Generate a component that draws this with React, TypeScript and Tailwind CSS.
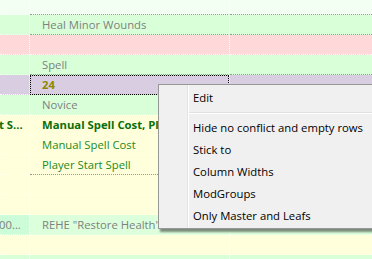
type Row = {
  left: string;
  mid: string;
  right: string;
  line: "gray" | "white" | "none";
  leftText?: string;
  leftClass?: string;
  midText?: string;
  midClass?: string;
  focus?: boolean;
};

const GREEN = "bg-[#d9ffd9]";
const PINK = "bg-[#ffd9d9]";
const PURPLE = "bg-[#d9cde1]";
const YELLOW = "bg-[#ffffdc]";

const rows: Row[] = [
  { left: GREEN, mid: GREEN, right: GREEN, line: "gray", midText: "Heal Minor Wounds", midClass: "text-[#808080]" },
  { left: PINK, mid: PINK, right: PINK, line: "white" },
  { left: GREEN, mid: GREEN, right: GREEN, line: "gray", midText: "Spell", midClass: "text-[#808080]" },
  { left: PURPLE, mid: PURPLE, right: PURPLE, line: "none", midText: "24", midClass: "text-[#8a8a00] font-bold", focus: true },
  { left: GREEN, mid: GREEN, right: GREEN, line: "white", midText: "Novice", midClass: "text-[#808080]" },
  {
    left: YELLOW,
    mid: YELLOW,
    right: YELLOW,
    line: "white",
    leftText: "t S...",
    leftClass: "text-[#0b6e0b] font-bold",
    midText: "Manual Spell Cost, Player Start Spell",
    midClass: "text-[#0b6e0b] font-bold",
  },
  { left: YELLOW, mid: YELLOW, right: YELLOW, line: "white", midText: "Manual Spell Cost", midClass: "text-[#228a22]" },
  { left: YELLOW, mid: YELLOW, right: YELLOW, line: "gray", midText: "Player Start Spell", midClass: "text-[#228a22]" },
  { left: YELLOW, mid: YELLOW, right: YELLOW, line: "white" },
  { left: YELLOW, mid: YELLOW, right: YELLOW, line: "white" },
  {
    left: "bg-[#ccfcd8]",
    mid: "bg-[#dcffdc]",
    right: "bg-[#dcffdc]",
    line: "white",
    leftText: "00...",
    leftClass: "text-[#808080]",
    midText: 'REHE "Restore Health"',
    midClass: "text-[#808080]",
  },
  { left: YELLOW, mid: YELLOW, right: YELLOW, line: "white" },
  { left: GREEN, mid: GREEN, right: GREEN, line: "white" },
];

const lineClass = {
  gray: "border-b border-dotted border-b-[#9a9a9a]",
  white: "border-b border-dotted border-b-white",
  none: "",
};

export default function App() {
  return (
    <div
      className="relative w-[372px] h-[259px] overflow-hidden bg-[#f2fff2] text-[11.3px] leading-none"
      style={{ fontFamily: '"Open Sans", "Noto Sans", sans-serif' }}
    >
      {/* top partial row */}
      <div className="flex h-[15px]">
        <div className="w-[30px] border-r border-b border-dotted border-white" />
        <div className="w-[200px] border-r border-dotted border-r-white border-b border-b-[#9a9a9a]" />
        <div className="flex-1 border-b border-dotted border-b-[#9a9a9a]" />
      </div>

      {rows.map((r, i) => (
        <div key={i} className="flex h-[20px]">
          <div
            className={`w-[30px] shrink-0 overflow-hidden whitespace-nowrap flex items-center border-r border-b border-dotted border-white ${r.left}`}
          >
            {r.leftText && <span className={`-ml-[1px] ${r.leftClass}`}>{r.leftText}</span>}
          </div>
          <div
            className={`relative w-[200px] shrink-0 overflow-hidden whitespace-nowrap flex items-center pl-[12px] border-r border-dotted border-r-white ${lineClass[r.line]} ${r.mid}`}
          >
            {r.midText && <span className={r.midClass}>{r.midText}</span>}
            {r.focus && <span className="absolute inset-0 border border-dotted border-black" />}
          </div>
          <div className={`flex-1 ${lineClass[r.line]} ${r.right}`} />
        </div>
      ))}

      {/* context menu */}
      <div className="absolute left-[158px] top-[84px] w-[230px] h-[145px] bg-[#f0f0f0] border border-[#979797] shadow-[2px_3px_2px_rgba(0,0,0,0.45)] text-black text-[11.3px]">
        <div className="absolute left-[28px] top-0 bottom-0 w-[2px] border-l border-l-[#e2e3e3] border-r border-r-white" />
        <div className="flex flex-col pt-[2px]">
          <MenuItem label="Edit" />
          <div className="h-[8px] flex items-center pl-[30px]">
            <div className="w-full h-[2px] border-t border-t-[#e0e0e0] border-b border-b-white" />
          </div>
          <MenuItem label="Hide no conflict and empty rows" />
          <MenuItem label="Stick to" />
          <MenuItem label="Column Widths" />
          <MenuItem label="ModGroups" />
          <MenuItem label="Only Master and Leafs" />
        </div>
      </div>
    </div>
  );
}

function MenuItem({ label }: { label: string }) {
  return (
    <div className="h-[22px] flex items-center pl-[34px] whitespace-nowrap">
      <span>{label}</span>
    </div>
  );
}
